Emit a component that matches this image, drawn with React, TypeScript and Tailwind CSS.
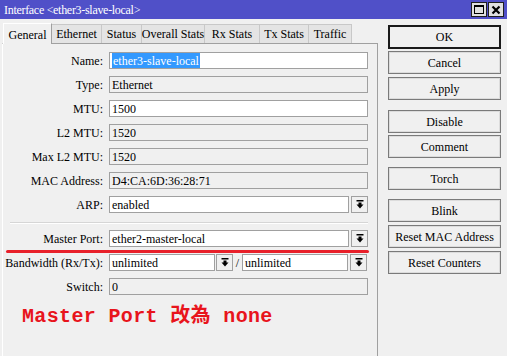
import React from "react";

const Drop = () => (
  <div className="w-[17px] h-[17px] border border-[#a0a0a0] bg-[#f0f0f0] flex items-center justify-center shrink-0">
    <svg width="8" height="9" viewBox="0 0 8 9">
      <rect x="0.5" y="0" width="7" height="1.5" fill="#000" />
      <polygon points="2.5,2.5 5.5,2.5 5.5,4.5 7.5,4.5 4,8.5 0.5,4.5 2.5,4.5" fill="#000" />
    </svg>
  </div>
);

const Field = ({ children, ro, w }: { children?: React.ReactNode; ro?: boolean; w: string }) => (
  <div
    className={`${w} h-[17px] border border-[#a0a0a0] ${ro ? "bg-[#f0f0f0]" : "bg-white"} flex items-center pl-[2px] leading-none overflow-hidden whitespace-nowrap shrink-0`}
  >
    {children}
  </div>
);

const Row = ({ label, children, mt }: { label: string; children: React.ReactNode; mt: string }) => (
  <div className={`flex items-center h-[17px] ${mt}`}>
    <div className="w-[100px] text-right whitespace-nowrap shrink-0">{label}</div>
    <div className="w-[6px] shrink-0" />
    {children}
  </div>
);

const Btn = ({ label, mt, def }: { label: string; mt: string; def?: boolean }) => (
  <div
    className={`${mt} w-[113px] h-[23px] flex items-center justify-center bg-[#f0f0f0] ${
      def ? "border-2 border-[#1a1a1a] h-[24px]" : "border border-[#7a7a7a] shadow-[inset_0_0_0_1px_#dcdcdc]"
    }`}
  >
    {label}
  </div>
);

const tabs = ["Ethernet", "Status", "Overall Stats", "Rx Stats", "Tx Stats", "Traffic"];
const tabW = ["w-[50px]", "w-[40px]", "w-[63px]", "w-[55px]", "w-[49px]", "w-[43px]"];

export default function App() {
  return (
    <div
      className="w-[507px] h-[356px] bg-[#f0f0f0] overflow-hidden text-[12px] text-black"
      style={{ fontFamily: '"Liberation Serif", "Times New Roman", serif' }}
    >
      {/* title bar */}
      <div className="h-[19px] bg-[#5050c8] flex items-center justify-between pl-[4px] pr-[3px] text-white">
        <span className="text-[12px] leading-none tracking-[-0.3px]">Interface &lt;ether3-slave-local&gt;</span>
        <div className="flex gap-[1px]">
          <div className="w-[16px] h-[15px] bg-[#e0e0e0] border border-[#202020] flex items-center justify-center">
            <div className="w-[10px] h-[9px] border border-black border-t-2" />
          </div>
          <div className="w-[16px] h-[15px] bg-[#e0e0e0] border border-[#202020] flex items-center justify-center">
            <svg width="10" height="10" viewBox="0 0 10 10">
              <path d="M1.5 1.5 L8.5 8.5 M8.5 1.5 L1.5 8.5" stroke="#000" strokeWidth="2.2" />
            </svg>
          </div>
        </div>
      </div>

      <div className="flex">
        {/* left: tabs + panel */}
        <div className="w-[378px] shrink-0 pl-[2px] pt-[3px]">
          <div className="flex items-end h-[21px] pl-[1px]">
            <div className="w-[49px] h-[21px] bg-[#f0f0f0] border-l border-t border-white border-r border-r-[#a0a0a0] flex items-start justify-center pt-[2px] relative z-10 -mb-[1px]">
              General
            </div>
            {tabs.map((t, i) => (
              <div
                key={t}
                className={`${tabW[i]} h-[19px] bg-[#e4e4e4] border-t border-r border-[#c8c8c8] flex items-center justify-center whitespace-nowrap`}
              >
                {t}
              </div>
            ))}
          </div>
          <div className="w-[376px] h-[313px] border-t border-r border-[#a0a0a0] border-l border-l-white pt-[8px]">
            <Row label="Name:" mt="mt-0">
              <Field w="w-[259px]">
                <span className="bg-[#3399ff] text-white h-[15px] flex items-center px-[1px]">ether3-slave-local</span>
              </Field>
            </Row>
            <Row label="Type:" mt="mt-[7px]">
              <Field w="w-[259px]" ro>
                Ethernet
              </Field>
            </Row>
            <Row label="MTU:" mt="mt-[7px]">
              <Field w="w-[259px]">1500</Field>
            </Row>
            <Row label="L2 MTU:" mt="mt-[7px]">
              <Field w="w-[259px]" ro>
                1520
              </Field>
            </Row>
            <Row label="Max L2 MTU:" mt="mt-[7px]">
              <Field w="w-[259px]" ro>
                1520
              </Field>
            </Row>
            <Row label="MAC Address:" mt="mt-[7px]">
              <Field w="w-[259px]" ro>
                D4:CA:6D:36:28:71
              </Field>
            </Row>
            <Row label="ARP:" mt="mt-[7px]">
              <Field w="w-[240px]">enabled</Field>
              <div className="w-[2px] shrink-0" />
              <Drop />
            </Row>
            <div className="mt-[9px] ml-[7px] w-[358px] h-[1px] bg-[#d6d6d6] border-b border-white box-content" />
            <Row label="Master Port:" mt="mt-[6px]">
              <Field w="w-[240px]">ether2-master-local</Field>
              <div className="w-[2px] shrink-0" />
              <Drop />
            </Row>
            <div className="mt-[3px] ml-[3px] w-[363px] h-[3px] bg-[#e8202a] rounded-full" />
            <Row label="Bandwidth (Rx/Tx):" mt="mt-[1px]">
              <Field w="w-[106px]">unlimited</Field>
              <div className="w-[1px] shrink-0" />
              <Drop />
              <div className="w-[9px] text-center shrink-0">/</div>
              <Field w="w-[106px]">unlimited</Field>
              <div className="w-[2px] shrink-0" />
              <Drop />
            </Row>
            <Row label="Switch:" mt="mt-[7px]">
              <Field w="w-[259px]" ro>
                0
              </Field>
            </Row>
            <div
              className="mt-[8px] ml-[19px] text-[20px] font-bold text-[#e8141c] leading-[22px] whitespace-pre tracking-[0.35px]"
              style={{ fontFamily: '"Liberation Mono", "Noto Sans CJK TC", monospace' }}
            >
              Master Port <span style={{ fontFamily: '"Noto Sans CJK TC", sans-serif' }}>改為</span> none
            </div>
          </div>
        </div>

        {/* right: buttons */}
        <div className="ml-[10px] flex flex-col">
          <Btn label="OK" mt="mt-[6px]" def />
          <Btn label="Cancel" mt="mt-[2px]" />
          <Btn label="Apply" mt="mt-[3px]" />
          <Btn label="Disable" mt="mt-[10px]" />
          <Btn label="Comment" mt="mt-[2px]" />
          <Btn label="Torch" mt="mt-[9px]" />
          <Btn label="Blink" mt="mt-[9px]" />
          <Btn label="Reset MAC Address" mt="mt-[3px]" />
          <Btn label="Reset Counters" mt="mt-[3px]" />
        </div>
      </div>
    </div>
  );
}
